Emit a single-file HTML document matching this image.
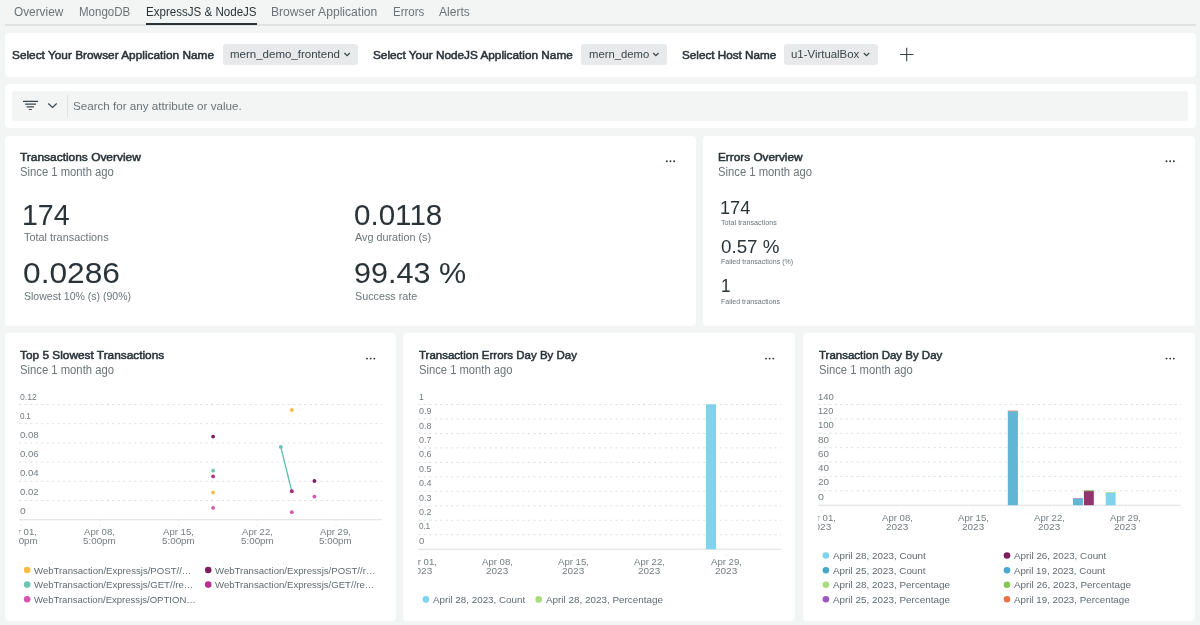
<!DOCTYPE html>
<html lang="en">
<head>
<meta charset="utf-8">
<title>ExpressJS &amp; NodeJS</title>
<style>
html,body{margin:0;padding:0;}
body{width:1200px;height:625px;overflow:hidden;background:#f3f4f4;will-change:transform;font-family:"Liberation Sans",sans-serif;color:#293338;position:relative;}
.abs{position:absolute;}
.panel{position:absolute;background:#fff;border-radius:4px;}
.t{position:absolute;white-space:nowrap;transform-origin:0 0;}
.clip{position:absolute;overflow:hidden;}
.dd{position:absolute;top:43.5px;height:21.7px;background:#e8e9ea;border-radius:3px;}
.gfx{position:absolute;left:0;top:0;}
</style>
</head>
<body>
<!-- tab underline -->
<div class="abs" style="left:4.5px;top:24px;width:1191px;height:1.5px;background:#dfe2e3;"></div>
<div class="abs" style="left:145.5px;top:23.2px;width:111px;height:2.3px;background:#293338;"></div>

<!-- variable bar -->
<div class="panel" style="left:4.5px;top:32.5px;width:1191px;height:44.2px;"></div>
<div class="dd" style="left:222.8px;width:135.2px;"></div>
<div class="dd" style="left:580.8px;width:86.2px;"></div>
<div class="dd" style="left:783.8px;width:94.2px;"></div>

<!-- filter bar -->
<div class="panel" style="left:4.5px;top:83.8px;width:1191px;height:44.4px;"></div>
<div class="abs" style="left:12.1px;top:91px;width:1175.6px;height:30px;background:#f3f4f4;border-radius:3px;"></div>
<div class="abs" style="left:67px;top:95px;width:1px;height:22px;background:#dfe1e2;"></div>

<!-- KPI panels -->
<div class="panel" style="left:4.5px;top:136px;width:691.2px;height:189.5px;"></div>
<div class="panel" style="left:703.2px;top:136px;width:492.3px;height:189.5px;"></div>

<!-- chart panels -->
<div class="panel" style="left:4.5px;top:332.8px;width:391.5px;height:288.2px;"></div>
<div class="panel" style="left:403.4px;top:332.8px;width:391.4px;height:288.2px;"></div>
<div class="panel" style="left:803.2px;top:332.8px;width:392.3px;height:288.2px;"></div>

<svg class="gfx" width="1200" height="625" viewBox="0 0 1200 625">
<line x1="19.2" x2="382.3" y1="404.5" y2="404.5" stroke="#dee0e1" stroke-width="1" stroke-dasharray="2.1 3.38"/>
<line x1="19.2" x2="382.3" y1="423.7" y2="423.7" stroke="#dee0e1" stroke-width="1" stroke-dasharray="2.1 3.38"/>
<line x1="19.2" x2="382.3" y1="442.9" y2="442.9" stroke="#dee0e1" stroke-width="1" stroke-dasharray="2.1 3.38"/>
<line x1="19.2" x2="382.3" y1="462.1" y2="462.1" stroke="#dee0e1" stroke-width="1" stroke-dasharray="2.1 3.38"/>
<line x1="19.2" x2="382.3" y1="481.3" y2="481.3" stroke="#dee0e1" stroke-width="1" stroke-dasharray="2.1 3.38"/>
<line x1="19.2" x2="382.3" y1="500.5" y2="500.5" stroke="#dee0e1" stroke-width="1" stroke-dasharray="2.1 3.38"/>
<line x1="19.2" x2="382.3" y1="519.7" y2="519.7" stroke="#dcdfe0" stroke-width="1.1"/>
<line x1="21.4" x2="21.4" y1="519.7" y2="526.3" stroke="#e3e5e6" stroke-width="1" stroke-dasharray="1.3 3.7"/>
<line x1="100" x2="100" y1="519.7" y2="526.3" stroke="#e3e5e6" stroke-width="1" stroke-dasharray="1.3 3.7"/>
<line x1="178.6" x2="178.6" y1="519.7" y2="526.3" stroke="#e3e5e6" stroke-width="1" stroke-dasharray="1.3 3.7"/>
<line x1="257.3" x2="257.3" y1="519.7" y2="526.3" stroke="#e3e5e6" stroke-width="1" stroke-dasharray="1.3 3.7"/>
<line x1="336" x2="336" y1="519.7" y2="526.3" stroke="#e3e5e6" stroke-width="1" stroke-dasharray="1.3 3.7"/>
<line x1="418.3" x2="781" y1="404.5" y2="404.5" stroke="#dee0e1" stroke-width="1" stroke-dasharray="2.1 3.38"/>
<line x1="418.3" x2="781" y1="418.97" y2="418.97" stroke="#dee0e1" stroke-width="1" stroke-dasharray="2.1 3.38"/>
<line x1="418.3" x2="781" y1="433.44" y2="433.44" stroke="#dee0e1" stroke-width="1" stroke-dasharray="2.1 3.38"/>
<line x1="418.3" x2="781" y1="447.91" y2="447.91" stroke="#dee0e1" stroke-width="1" stroke-dasharray="2.1 3.38"/>
<line x1="418.3" x2="781" y1="462.38" y2="462.38" stroke="#dee0e1" stroke-width="1" stroke-dasharray="2.1 3.38"/>
<line x1="418.3" x2="781" y1="476.85" y2="476.85" stroke="#dee0e1" stroke-width="1" stroke-dasharray="2.1 3.38"/>
<line x1="418.3" x2="781" y1="491.32" y2="491.32" stroke="#dee0e1" stroke-width="1" stroke-dasharray="2.1 3.38"/>
<line x1="418.3" x2="781" y1="505.79" y2="505.79" stroke="#dee0e1" stroke-width="1" stroke-dasharray="2.1 3.38"/>
<line x1="418.3" x2="781" y1="520.26" y2="520.26" stroke="#dee0e1" stroke-width="1" stroke-dasharray="2.1 3.38"/>
<line x1="418.3" x2="781" y1="534.73" y2="534.73" stroke="#dee0e1" stroke-width="1" stroke-dasharray="2.1 3.38"/>
<line x1="418.3" x2="781" y1="549.2" y2="549.2" stroke="#dcdfe0" stroke-width="1.1"/>
<line x1="421.4" x2="421.4" y1="549.2" y2="555.8" stroke="#e3e5e6" stroke-width="1" stroke-dasharray="1.3 3.7"/>
<line x1="497.4" x2="497.4" y1="549.2" y2="555.8" stroke="#e3e5e6" stroke-width="1" stroke-dasharray="1.3 3.7"/>
<line x1="573.7" x2="573.7" y1="549.2" y2="555.8" stroke="#e3e5e6" stroke-width="1" stroke-dasharray="1.3 3.7"/>
<line x1="650" x2="650" y1="549.2" y2="555.8" stroke="#e3e5e6" stroke-width="1" stroke-dasharray="1.3 3.7"/>
<line x1="726.4" x2="726.4" y1="549.2" y2="555.8" stroke="#e3e5e6" stroke-width="1" stroke-dasharray="1.3 3.7"/>
<line x1="818.4" x2="1181" y1="404.5" y2="404.5" stroke="#dee0e1" stroke-width="1" stroke-dasharray="2.1 3.38"/>
<line x1="818.4" x2="1181" y1="418.89" y2="418.89" stroke="#dee0e1" stroke-width="1" stroke-dasharray="2.1 3.38"/>
<line x1="818.4" x2="1181" y1="433.27" y2="433.27" stroke="#dee0e1" stroke-width="1" stroke-dasharray="2.1 3.38"/>
<line x1="818.4" x2="1181" y1="447.66" y2="447.66" stroke="#dee0e1" stroke-width="1" stroke-dasharray="2.1 3.38"/>
<line x1="818.4" x2="1181" y1="462.04" y2="462.04" stroke="#dee0e1" stroke-width="1" stroke-dasharray="2.1 3.38"/>
<line x1="818.4" x2="1181" y1="476.43" y2="476.43" stroke="#dee0e1" stroke-width="1" stroke-dasharray="2.1 3.38"/>
<line x1="818.4" x2="1181" y1="490.81" y2="490.81" stroke="#dee0e1" stroke-width="1" stroke-dasharray="2.1 3.38"/>
<line x1="818.4" x2="1181" y1="505.2" y2="505.2" stroke="#dcdfe0" stroke-width="1.1"/>
<line x1="821" x2="821" y1="505.2" y2="511.8" stroke="#e3e5e6" stroke-width="1" stroke-dasharray="1.3 3.7"/>
<line x1="897.2" x2="897.2" y1="505.2" y2="511.8" stroke="#e3e5e6" stroke-width="1" stroke-dasharray="1.3 3.7"/>
<line x1="973.4" x2="973.4" y1="505.2" y2="511.8" stroke="#e3e5e6" stroke-width="1" stroke-dasharray="1.3 3.7"/>
<line x1="1049.6" x2="1049.6" y1="505.2" y2="511.8" stroke="#e3e5e6" stroke-width="1" stroke-dasharray="1.3 3.7"/>
<line x1="1125.8" x2="1125.8" y1="505.2" y2="511.8" stroke="#e3e5e6" stroke-width="1" stroke-dasharray="1.3 3.7"/>
<line x1="280.8" y1="446.9" x2="291.8" y2="491.3" stroke="#5bbfac" stroke-width="1.3"/>
<circle cx="213.1" cy="436.6" r="1.9" fill="#7d1f5f"/>
<circle cx="213.1" cy="470.7" r="1.9" fill="#6cc4b3"/>
<circle cx="213.1" cy="476.4" r="1.9" fill="#bb2d8d"/>
<circle cx="213.1" cy="492.5" r="1.9" fill="#f5bd47"/>
<circle cx="213.1" cy="507.9" r="1.9" fill="#d557b0"/>
<circle cx="291.8" cy="410" r="1.9" fill="#f5bd47"/>
<circle cx="280.8" cy="446.9" r="1.9" fill="#6cc4b3"/>
<circle cx="291.8" cy="512.2" r="1.9" fill="#d557b0"/>
<circle cx="314.4" cy="481" r="1.9" fill="#7d1f5f"/>
<circle cx="314.4" cy="496.6" r="1.9" fill="#d557b0"/>
<circle cx="291.8" cy="491.3" r="2" fill="#a52a80"/>
<rect x="706" y="404.3" width="10" height="144.9" fill="#7fd3ed"/>
<rect x="1007.8" y="410.9" width="10.1" height="94.3" fill="#62b6d5"/>
<rect x="1007.8" y="410.5" width="10.1" height="0.9" fill="#e8a58a"/>
<rect x="1073" y="498.5" width="9.9" height="6.7" fill="#62b6d5"/>
<rect x="1073" y="498.1" width="9.9" height="0.9" fill="#b49ad9"/>
<rect x="1083.9" y="490.7" width="9.9" height="14.5" fill="#92346f"/>
<rect x="1083.9" y="490.3" width="9.9" height="0.9" fill="#8fd06f"/>
<rect x="1105.7" y="492.4" width="9.9" height="12.8" fill="#7fd3ed"/>
<rect x="1105.7" y="492" width="9.9" height="0.9" fill="#b5e29a"/>
<circle cx="27.15" cy="570" r="3.3" fill="#f5bd47"/>
<circle cx="27.15" cy="584.6" r="3.3" fill="#6cc4b3"/>
<circle cx="27.15" cy="599.2" r="3.3" fill="#d557b0"/>
<circle cx="208.2" cy="570" r="3.3" fill="#7d1f5f"/>
<circle cx="208.2" cy="584.6" r="3.3" fill="#bb2d8d"/>
<circle cx="425.9" cy="599.4" r="3.3" fill="#7fd3ed"/>
<circle cx="538.7" cy="599.4" r="3.3" fill="#a8dd7c"/>
<circle cx="825.9" cy="555.5" r="3.3" fill="#7fd3ed"/>
<circle cx="825.9" cy="570.3" r="3.3" fill="#4aa6c9"/>
<circle cx="825.9" cy="584.7" r="3.3" fill="#a8dd7c"/>
<circle cx="825.9" cy="599.3" r="3.3" fill="#9b59c0"/>
<circle cx="1007" cy="555.5" r="3.3" fill="#7d1f5f"/>
<circle cx="1007" cy="570.3" r="3.3" fill="#4aa9cf"/>
<circle cx="1007" cy="584.7" r="3.3" fill="#85c35b"/>
<circle cx="1007" cy="599.3" r="3.3" fill="#e8754a"/>
<circle cx="666.8" cy="161.2" r="0.95" fill="#293338"/>
<circle cx="670.45" cy="161.2" r="0.95" fill="#293338"/>
<circle cx="674.1" cy="161.2" r="0.95" fill="#293338"/>
<circle cx="1166.5" cy="161.2" r="0.95" fill="#293338"/>
<circle cx="1170.15" cy="161.2" r="0.95" fill="#293338"/>
<circle cx="1173.8" cy="161.2" r="0.95" fill="#293338"/>
<circle cx="367" cy="358.6" r="0.95" fill="#293338"/>
<circle cx="370.65" cy="358.6" r="0.95" fill="#293338"/>
<circle cx="374.3" cy="358.6" r="0.95" fill="#293338"/>
<circle cx="766" cy="358.6" r="0.95" fill="#293338"/>
<circle cx="769.65" cy="358.6" r="0.95" fill="#293338"/>
<circle cx="773.3" cy="358.6" r="0.95" fill="#293338"/>
<circle cx="1166.5" cy="358.6" r="0.95" fill="#293338"/>
<circle cx="1170.15" cy="358.6" r="0.95" fill="#293338"/>
<circle cx="1173.8" cy="358.6" r="0.95" fill="#293338"/>
</svg>
<svg class="abs" style="left:0;top:0;" width="1200" height="625" viewBox="0 0 1200 625" fill="none" stroke="#3a4449">
<!-- dropdown chevrons -->
<path d="M344.4 53 L347.1 55.7 L349.8 53" stroke-width="1.2"/>
<path d="M653.2 53 L655.9 55.7 L658.6 53" stroke-width="1.2"/>
<path d="M863.8 53 L866.5 55.7 L869.2 53" stroke-width="1.2"/>
<!-- plus -->
<path d="M906.7 47.8 V61.2 M900 54.5 H913.4" stroke-width="1.1"/>
<!-- filter icon -->
<path d="M23 101.3 H38 M25.1 104.1 H36 M26.7 106.8 H34 M28.8 109.5 H31.8" stroke-width="1.15"/>
<!-- filter chevron -->
<path d="M48.3 103.5 L52.5 107.5 L56.7 103.5" stroke-width="1.1"/>
</svg>

<div class="t" style="left:13.9px;top:5px;font-size:12px;line-height:15px;color:#6b7478;transform:scaleX(0.985);">Overview</div>
<div class="t" style="left:79px;top:5px;font-size:12px;line-height:15px;color:#6b7478;transform:scaleX(0.961);">MongoDB</div>
<div class="t" style="left:145.7px;top:5px;font-size:12px;line-height:15px;color:#293338;transform:scaleX(0.964);">ExpressJS &amp; NodeJS</div>
<div class="t" style="left:271.2px;top:5px;font-size:12px;line-height:15px;color:#6b7478;transform:scaleX(1.009);">Browser Application</div>
<div class="t" style="left:392.5px;top:5px;font-size:12px;line-height:15px;color:#6b7478;transform:scaleX(0.958);">Errors</div>
<div class="t" style="left:439.2px;top:5px;font-size:12px;line-height:15px;color:#6b7478;transform:scaleX(1.004);">Alerts</div>
<div class="t" style="left:12.2px;top:48px;font-size:11px;line-height:14px;color:#293338;-webkit-text-stroke:0.5px;transform:scaleX(1.076);">Select Your Browser Application Name</div>
<div class="t" style="left:372.5px;top:48px;font-size:11px;line-height:14px;color:#293338;-webkit-text-stroke:0.5px;transform:scaleX(1.071);">Select Your NodeJS Application Name</div>
<div class="t" style="left:681.7px;top:48px;font-size:11px;line-height:14px;color:#293338;-webkit-text-stroke:0.5px;transform:scaleX(1.063);">Select Host Name</div>
<div class="t" style="left:230px;top:47px;font-size:11.5px;line-height:14px;color:#3a4449;">mern_demo_frontend</div>
<div class="t" style="left:588.5px;top:47px;font-size:11.5px;line-height:14px;color:#3a4449;transform:scaleX(0.981);">mern_demo</div>
<div class="t" style="left:790.5px;top:47px;font-size:11.5px;line-height:14px;color:#3a4449;transform:scaleX(0.992);">u1-VirtualBox</div>
<div class="t" style="left:73.3px;top:99px;font-size:11px;line-height:14px;color:#6b7478;transform:scaleX(1.057);">Search for any attribute or value.</div>
<div class="t" style="left:19.8px;top:150px;font-size:11px;line-height:14px;color:#293338;-webkit-text-stroke:0.5px;transform:scaleX(1.084);">Transactions Overview</div>
<div class="t" style="left:19.8px;top:165px;font-size:12px;line-height:15px;color:#6b7478;transform:scaleX(0.938);">Since 1 month ago</div>
<div class="t" style="left:22.4px;top:197px;font-size:30px;line-height:36px;color:#293338;transform:scaleX(0.950);">174</div>
<div class="t" style="left:24.3px;top:230px;font-size:11px;line-height:14px;color:#6b7478;transform:scaleX(0.988);">Total transactions</div>
<div class="t" style="left:23.24px;top:255px;font-size:30px;line-height:36px;color:#293338;transform:scaleX(1.057);">0.0286</div>
<div class="t" style="left:24.3px;top:289px;font-size:11px;line-height:14px;color:#6b7478;transform:scaleX(0.957);">Slowest 10% (s) (90%)</div>
<div class="t" style="left:353.91px;top:197px;font-size:30px;line-height:36px;color:#293338;transform:scaleX(0.986);">0.0118</div>
<div class="t" style="left:354.9px;top:230px;font-size:11px;line-height:14px;color:#6b7478;transform:scaleX(0.982);">Avg duration (s)</div>
<div class="t" style="left:354.48px;top:255px;font-size:30px;line-height:36px;color:#293338;transform:scaleX(1.018);">99.43 %</div>
<div class="t" style="left:354.9px;top:289px;font-size:11px;line-height:14px;color:#6b7478;transform:scaleX(0.978);">Success rate</div>
<div class="t" style="left:718px;top:150px;font-size:11px;line-height:14px;color:#293338;-webkit-text-stroke:0.5px;transform:scaleX(1.072);">Errors Overview</div>
<div class="t" style="left:718px;top:165px;font-size:12px;line-height:15px;color:#6b7478;transform:scaleX(0.939);">Since 1 month ago</div>
<div class="t" style="left:719.54px;top:196px;font-size:19px;line-height:23px;color:#293338;transform:scaleX(0.957);">174</div>
<div class="t" style="left:720.5px;top:218px;font-size:7px;line-height:9px;color:#6b7478;transform:scaleX(1.024);">Total transactions</div>
<div class="t" style="left:721px;top:235px;font-size:19px;line-height:23px;color:#293338;transform:scaleX(0.987);">0.57 %</div>
<div class="t" style="left:720.5px;top:257px;font-size:7px;line-height:9px;color:#6b7478;transform:scaleX(1.008);">Failed transactions (%)</div>
<div class="t" style="left:721.1px;top:274px;font-size:19px;line-height:23px;color:#293338;transform:scaleX(0.900);">1</div>
<div class="t" style="left:720.5px;top:297px;font-size:7px;line-height:9px;color:#6b7478;transform:scaleX(1.004);">Failed transactions</div>
<div class="t" style="left:19.9px;top:348px;font-size:11px;line-height:14px;color:#293338;-webkit-text-stroke:0.5px;transform:scaleX(1.077);">Top 5 Slowest Transactions</div>
<div class="t" style="left:19.9px;top:363px;font-size:12px;line-height:15px;color:#6b7478;transform:scaleX(0.939);">Since 1 month ago</div>
<div class="t" style="left:419px;top:348px;font-size:11px;line-height:14px;color:#293338;-webkit-text-stroke:0.5px;transform:scaleX(1.045);">Transaction Errors Day By Day</div>
<div class="t" style="left:419px;top:363px;font-size:12px;line-height:15px;color:#6b7478;transform:scaleX(0.934);">Since 1 month ago</div>
<div class="t" style="left:818.8px;top:348px;font-size:11px;line-height:14px;color:#293338;-webkit-text-stroke:0.5px;transform:scaleX(1.043);">Transaction Day By Day</div>
<div class="t" style="left:818.8px;top:363px;font-size:12px;line-height:15px;color:#6b7478;transform:scaleX(0.936);">Since 1 month ago</div>
<div class="t" style="left:19.5px;top:391px;font-size:9.5px;line-height:12px;color:#737c81;transform:scaleX(0.906);">0.12</div>
<div class="t" style="left:19.5px;top:410px;font-size:9.5px;line-height:12px;color:#737c81;letter-spacing:-0.35px;transform:scaleX(0.860);">0.1</div>
<div class="t" style="left:19.5px;top:429px;font-size:9.5px;line-height:12px;color:#737c81;transform:scaleX(1.011);">0.08</div>
<div class="t" style="left:19.5px;top:448px;font-size:9.5px;line-height:12px;color:#737c81;transform:scaleX(1.011);">0.06</div>
<div class="t" style="left:19.5px;top:467px;font-size:9.5px;line-height:12px;color:#737c81;transform:scaleX(1.011);">0.04</div>
<div class="t" style="left:19.5px;top:486px;font-size:9.5px;line-height:12px;color:#737c81;transform:scaleX(1.011);">0.02</div>
<div class="t" style="left:19.5px;top:505px;font-size:9.5px;line-height:12px;color:#737c81;transform:scaleX(1.080);">0</div>
<div class="clip" style="left:19.2px;top:527px;width:60px;height:11px;"><div class="t" style="left:-13.4px;top:0px;font-size:9px;line-height:11px;color:#737c81;transform:scaleX(1.066);">Apr 01,</div></div>
<div class="clip" style="left:19.2px;top:536px;width:60px;height:11px;"><div class="t" style="left:-14.4px;top:0px;font-size:9px;line-height:11px;color:#737c81;transform:scaleX(1.091);">5:00pm</div></div>
<div class="t" style="left:84.4px;top:527px;font-size:9px;line-height:11px;color:#737c81;transform:scaleX(1.066);">Apr 08,</div>
<div class="t" style="left:83.4px;top:536px;font-size:9px;line-height:11px;color:#737c81;transform:scaleX(1.091);">5:00pm</div>
<div class="t" style="left:163px;top:527px;font-size:9px;line-height:11px;color:#737c81;transform:scaleX(1.066);">Apr 15,</div>
<div class="t" style="left:162px;top:536px;font-size:9px;line-height:11px;color:#737c81;transform:scaleX(1.091);">5:00pm</div>
<div class="t" style="left:241.7px;top:527px;font-size:9px;line-height:11px;color:#737c81;transform:scaleX(1.066);">Apr 22,</div>
<div class="t" style="left:240.7px;top:536px;font-size:9px;line-height:11px;color:#737c81;transform:scaleX(1.091);">5:00pm</div>
<div class="t" style="left:320.4px;top:527px;font-size:9px;line-height:11px;color:#737c81;transform:scaleX(1.066);">Apr 29,</div>
<div class="t" style="left:319.4px;top:536px;font-size:9px;line-height:11px;color:#737c81;transform:scaleX(1.091);">5:00pm</div>
<div class="t" style="left:419px;top:391px;font-size:9.5px;line-height:12px;color:#737c81;transform:scaleX(0.900);">1</div>
<div class="t" style="left:419px;top:405px;font-size:9.5px;line-height:12px;color:#737c81;transform:scaleX(0.944);">0.9</div>
<div class="t" style="left:419px;top:420px;font-size:9.5px;line-height:12px;color:#737c81;transform:scaleX(0.944);">0.8</div>
<div class="t" style="left:419px;top:434px;font-size:9.5px;line-height:12px;color:#737c81;transform:scaleX(0.944);">0.7</div>
<div class="t" style="left:419px;top:448px;font-size:9.5px;line-height:12px;color:#737c81;transform:scaleX(0.944);">0.6</div>
<div class="t" style="left:419px;top:463px;font-size:9.5px;line-height:12px;color:#737c81;transform:scaleX(0.944);">0.5</div>
<div class="t" style="left:419px;top:477px;font-size:9.5px;line-height:12px;color:#737c81;transform:scaleX(0.944);">0.4</div>
<div class="t" style="left:419px;top:492px;font-size:9.5px;line-height:12px;color:#737c81;transform:scaleX(0.944);">0.3</div>
<div class="t" style="left:419px;top:506px;font-size:9.5px;line-height:12px;color:#737c81;transform:scaleX(0.944);">0.2</div>
<div class="t" style="left:419px;top:520px;font-size:9.5px;line-height:12px;color:#737c81;letter-spacing:-0.18px;transform:scaleX(0.860);">0.1</div>
<div class="t" style="left:419px;top:535px;font-size:9.5px;line-height:12px;color:#737c81;">0</div>
<div class="clip" style="left:418.3px;top:557px;width:60px;height:11px;"><div class="t" style="left:-12.5px;top:0px;font-size:9px;line-height:11px;color:#737c81;transform:scaleX(1.066);">Apr 01,</div></div>
<div class="clip" style="left:418.3px;top:566px;width:60px;height:11px;"><div class="t" style="left:-8.5px;top:0px;font-size:9px;line-height:11px;color:#737c81;transform:scaleX(1.109);">2023</div></div>
<div class="t" style="left:481.8px;top:557px;font-size:9px;line-height:11px;color:#737c81;transform:scaleX(1.066);">Apr 08,</div>
<div class="t" style="left:485.8px;top:566px;font-size:9px;line-height:11px;color:#737c81;transform:scaleX(1.109);">2023</div>
<div class="t" style="left:558.1px;top:557px;font-size:9px;line-height:11px;color:#737c81;transform:scaleX(1.066);">Apr 15,</div>
<div class="t" style="left:562.1px;top:566px;font-size:9px;line-height:11px;color:#737c81;transform:scaleX(1.109);">2023</div>
<div class="t" style="left:634.4px;top:557px;font-size:9px;line-height:11px;color:#737c81;transform:scaleX(1.066);">Apr 22,</div>
<div class="t" style="left:638.4px;top:566px;font-size:9px;line-height:11px;color:#737c81;transform:scaleX(1.109);">2023</div>
<div class="t" style="left:710.8px;top:557px;font-size:9px;line-height:11px;color:#737c81;transform:scaleX(1.066);">Apr 29,</div>
<div class="t" style="left:714.8px;top:566px;font-size:9px;line-height:11px;color:#737c81;transform:scaleX(1.109);">2023</div>
<div class="t" style="left:818.4px;top:391px;font-size:9.5px;line-height:12px;color:#737c81;transform:scaleX(0.996);">140</div>
<div class="t" style="left:818.4px;top:405px;font-size:9.5px;line-height:12px;color:#737c81;transform:scaleX(0.964);">120</div>
<div class="t" style="left:818.4px;top:419px;font-size:9.5px;line-height:12px;color:#737c81;transform:scaleX(0.996);">100</div>
<div class="t" style="left:818.4px;top:434px;font-size:9.5px;line-height:12px;color:#737c81;transform:scaleX(1.041);">80</div>
<div class="t" style="left:818.4px;top:448px;font-size:9.5px;line-height:12px;color:#737c81;transform:scaleX(1.041);">60</div>
<div class="t" style="left:818.4px;top:462px;font-size:9.5px;line-height:12px;color:#737c81;transform:scaleX(1.041);">40</div>
<div class="t" style="left:818.4px;top:476px;font-size:9.5px;line-height:12px;color:#737c81;transform:scaleX(1.041);">20</div>
<div class="t" style="left:818.4px;top:491px;font-size:9.5px;line-height:12px;color:#737c81;transform:scaleX(1.120);">0</div>
<div class="clip" style="left:818.4px;top:513px;width:60px;height:11px;"><div class="t" style="left:-13px;top:0px;font-size:9px;line-height:11px;color:#737c81;transform:scaleX(1.066);">Apr 01,</div></div>
<div class="clip" style="left:818.4px;top:522px;width:60px;height:11px;"><div class="t" style="left:-9px;top:0px;font-size:9px;line-height:11px;color:#737c81;transform:scaleX(1.109);">2023</div></div>
<div class="t" style="left:881.6px;top:513px;font-size:9px;line-height:11px;color:#737c81;transform:scaleX(1.066);">Apr 08,</div>
<div class="t" style="left:885.6px;top:522px;font-size:9px;line-height:11px;color:#737c81;transform:scaleX(1.109);">2023</div>
<div class="t" style="left:957.8px;top:513px;font-size:9px;line-height:11px;color:#737c81;transform:scaleX(1.066);">Apr 15,</div>
<div class="t" style="left:961.8px;top:522px;font-size:9px;line-height:11px;color:#737c81;transform:scaleX(1.109);">2023</div>
<div class="t" style="left:1034px;top:513px;font-size:9px;line-height:11px;color:#737c81;transform:scaleX(1.066);">Apr 22,</div>
<div class="t" style="left:1038px;top:522px;font-size:9px;line-height:11px;color:#737c81;transform:scaleX(1.109);">2023</div>
<div class="t" style="left:1110.2px;top:513px;font-size:9px;line-height:11px;color:#737c81;transform:scaleX(1.066);">Apr 29,</div>
<div class="t" style="left:1114.2px;top:522px;font-size:9px;line-height:11px;color:#737c81;transform:scaleX(1.109);">2023</div>
<div class="t" style="left:34.2px;top:565px;font-size:9.5px;line-height:12px;color:#5f696f;transform:scaleX(1.011);">WebTransaction/Expressjs/POST//…</div>
<div class="t" style="left:34.2px;top:579px;font-size:9.5px;line-height:12px;color:#5f696f;transform:scaleX(1.010);">WebTransaction/Expressjs/GET//re…</div>
<div class="t" style="left:34.2px;top:594px;font-size:9.5px;line-height:12px;color:#5f696f;transform:scaleX(1.005);">WebTransaction/Expressjs/OPTION…</div>
<div class="t" style="left:215.3px;top:565px;font-size:9.5px;line-height:12px;color:#5f696f;transform:scaleX(1.010);">WebTransaction/Expressjs/POST//r…</div>
<div class="t" style="left:215.3px;top:579px;font-size:9.5px;line-height:12px;color:#5f696f;transform:scaleX(1.010);">WebTransaction/Expressjs/GET//re…</div>
<div class="t" style="left:433.1px;top:594px;font-size:9.5px;line-height:12px;color:#5f696f;transform:scaleX(1.033);">April 28, 2023, Count</div>
<div class="t" style="left:545.9px;top:594px;font-size:9.5px;line-height:12px;color:#5f696f;transform:scaleX(1.040);">April 28, 2023, Percentage</div>
<div class="t" style="left:832.8px;top:550px;font-size:9.5px;line-height:12px;color:#5f696f;transform:scaleX(1.039);">April 28, 2023, Count</div>
<div class="t" style="left:832.8px;top:565px;font-size:9.5px;line-height:12px;color:#5f696f;transform:scaleX(1.037);">April 25, 2023, Count</div>
<div class="t" style="left:832.8px;top:579px;font-size:9.5px;line-height:12px;color:#5f696f;transform:scaleX(1.041);">April 28, 2023, Percentage</div>
<div class="t" style="left:832.8px;top:594px;font-size:9.5px;line-height:12px;color:#5f696f;transform:scaleX(1.039);">April 25, 2023, Percentage</div>
<div class="t" style="left:1014.2px;top:550px;font-size:9.5px;line-height:12px;color:#5f696f;transform:scaleX(1.034);">April 26, 2023, Count</div>
<div class="t" style="left:1014.2px;top:565px;font-size:9.5px;line-height:12px;color:#5f696f;transform:scaleX(1.021);">April 19, 2023, Count</div>
<div class="t" style="left:1014.2px;top:579px;font-size:9.5px;line-height:12px;color:#5f696f;transform:scaleX(1.040);">April 26, 2023, Percentage</div>
<div class="t" style="left:1014.2px;top:594px;font-size:9.5px;line-height:12px;color:#5f696f;transform:scaleX(1.028);">April 19, 2023, Percentage</div>
</body>
</html>
